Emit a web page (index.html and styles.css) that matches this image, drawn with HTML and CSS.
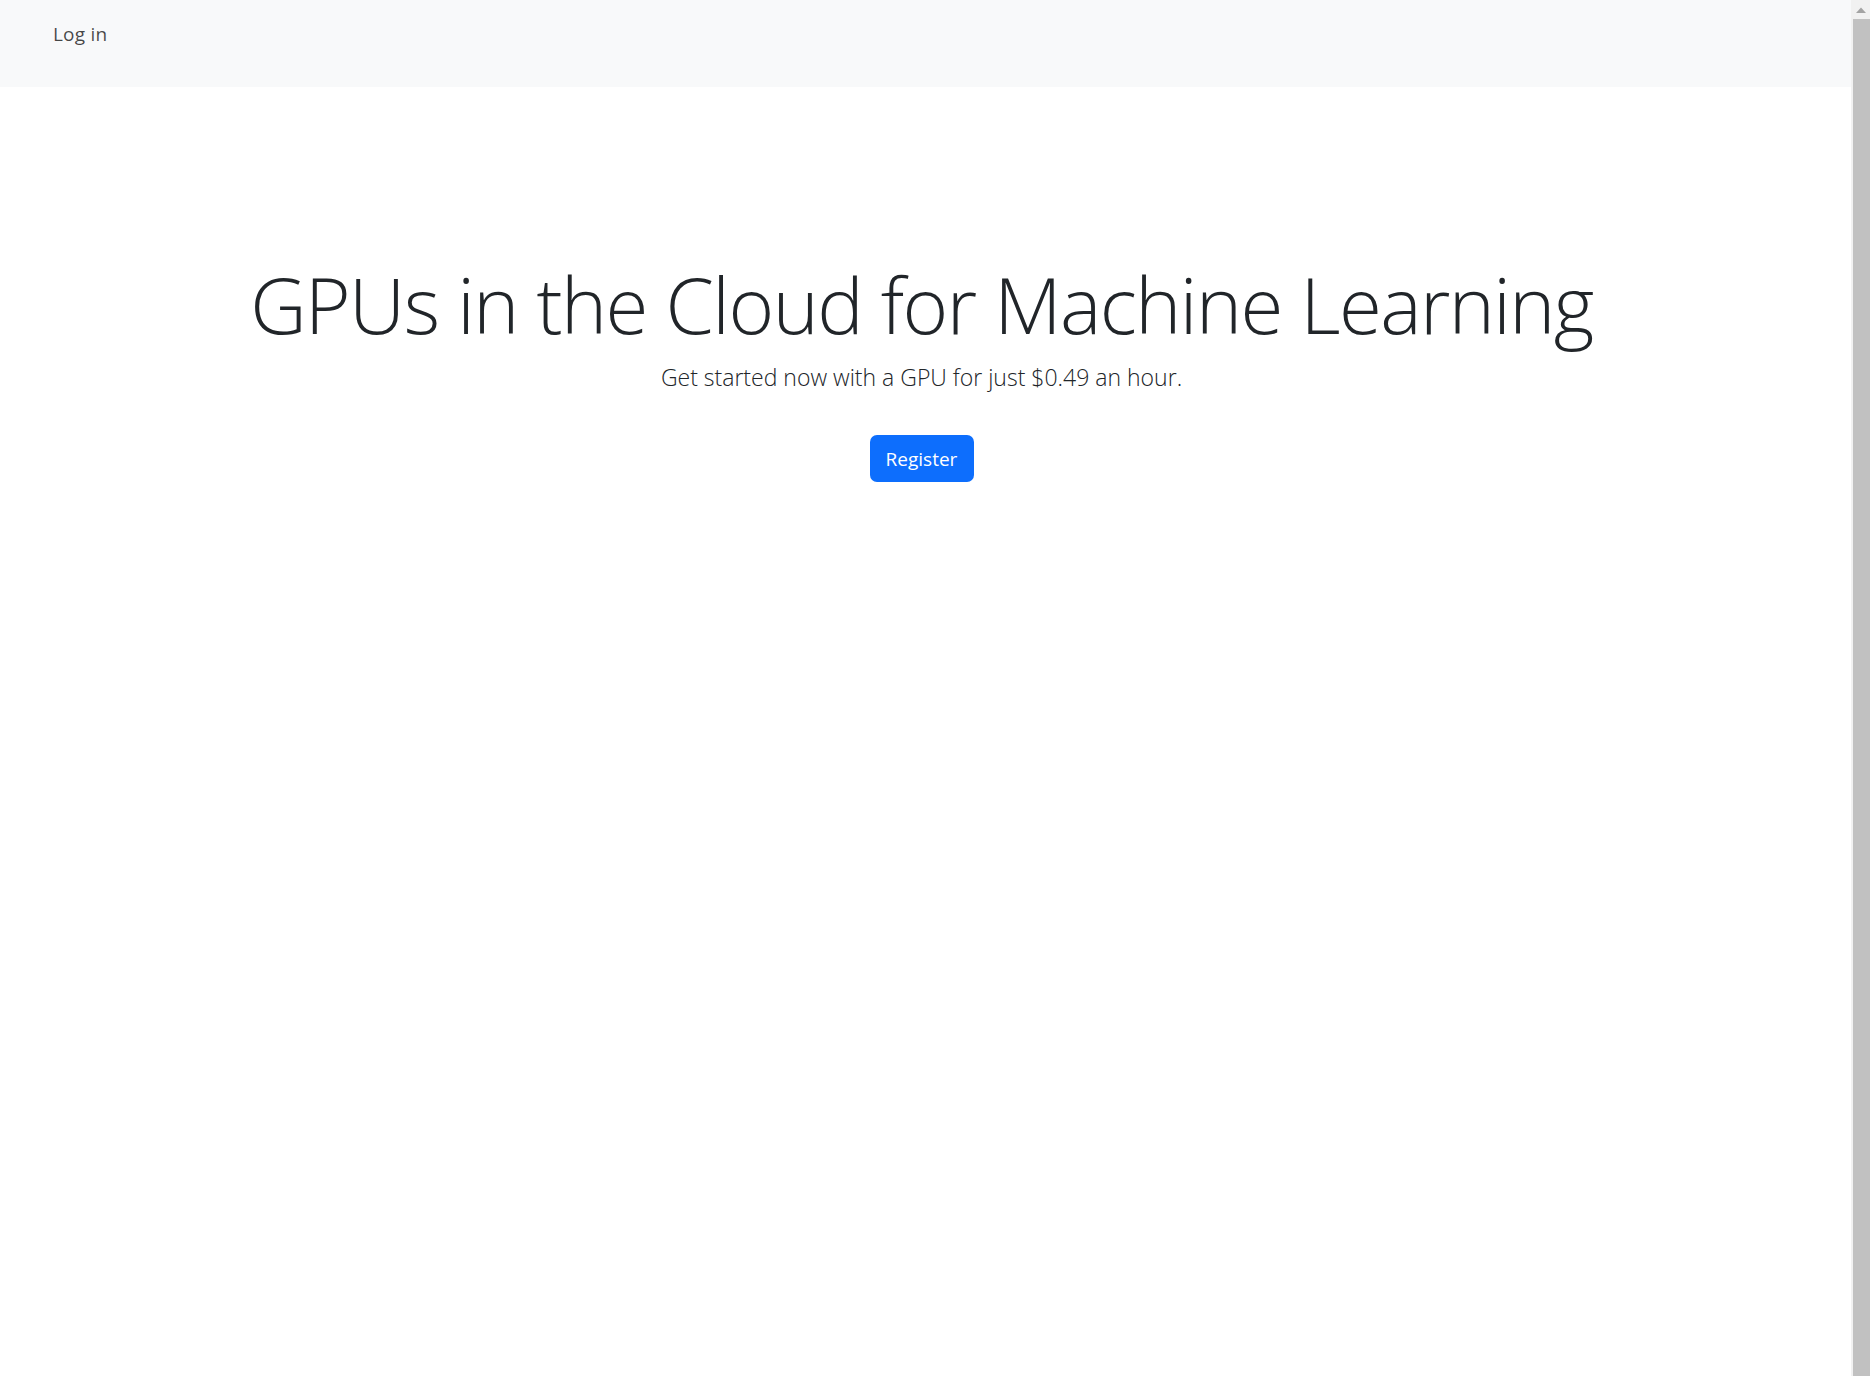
FILE: index.html
```html
<!DOCTYPE html>
<html lang="en">
<head>
<meta charset="utf-8">
<title>GPUs in the Cloud for Machine Learning</title>
<link rel="stylesheet" href="styles.css">
</head>
<body>
<div class="page">
  <nav class="navbar">
    <a class="nav-link" href="#">Log in</a>
  </nav>
  <main class="hero">
    <h1 class="display">GPUs in the Cloud for Machine Learning</h1>
    <p class="lead">Get started now with a GPU for just $0.49 an hour.</p>
    <a class="btn-primary" href="#">Register</a>
  </main>
</div>
<aside class="scrollbar" aria-hidden="true">
  <div class="sb-up">
    <svg width="10" height="6" viewBox="0 0 10 6"><path d="M0 6 L5 0.5 L10 6 Z" fill="#a3a3a3"/></svg>
  </div>
  <div class="sb-thumb"></div>
</aside>
</body>
</html>
```
FILE: styles.css
```css
html, body {
  height: 100%;
}
body {
  margin: 0;
  display: flex;
  overflow: hidden;
  font-family: "Open Sans", "Noto Sans", sans-serif;
  color: #212529;
  background: #fff;
}
.page {
  flex: 1;
  min-width: 0;
}
.navbar {
  height: 87px;
  box-sizing: border-box;
  background: #f8f9fa;
  padding: 19px 0 0 53px;
}
.nav-link {
  font-size: 19px;
  line-height: 30px;
  letter-spacing: 0.2px;
  color: rgba(0, 0, 0, 0.72);
  text-decoration: none;
}
.hero {
  display: flex;
  flex-direction: column;
  align-items: center;
  padding-top: 171px;
  padding-right: 8px;
}
.display {
  margin: 0;
  font-size: 78px;
  font-weight: 300;
  line-height: 1.2;
  letter-spacing: -1.55px;
}
.lead {
  margin: 8px 0 0;
  font-size: 23px;
  font-weight: 300;
  line-height: 1.5;
}
.btn-primary {
  margin-top: 41px;
  display: inline-flex;
  align-items: center;
  justify-content: center;
  width: 104px;
  height: 47px;
  box-sizing: border-box;
  border-radius: 7px;
  background: #0d6efd;
  color: #fff;
  font-size: 19px;
  text-decoration: none;
}
.scrollbar {
  width: 19px;
  flex: none;
  display: flex;
  flex-direction: column;
  background: #f1f1f1;
}
.sb-up {
  height: 19px;
  flex: none;
  display: flex;
  align-items: center;
  justify-content: center;
}
.sb-thumb {
  flex: 1;
  margin-left: 2px;
  background: #c1c1c1;
}
```
